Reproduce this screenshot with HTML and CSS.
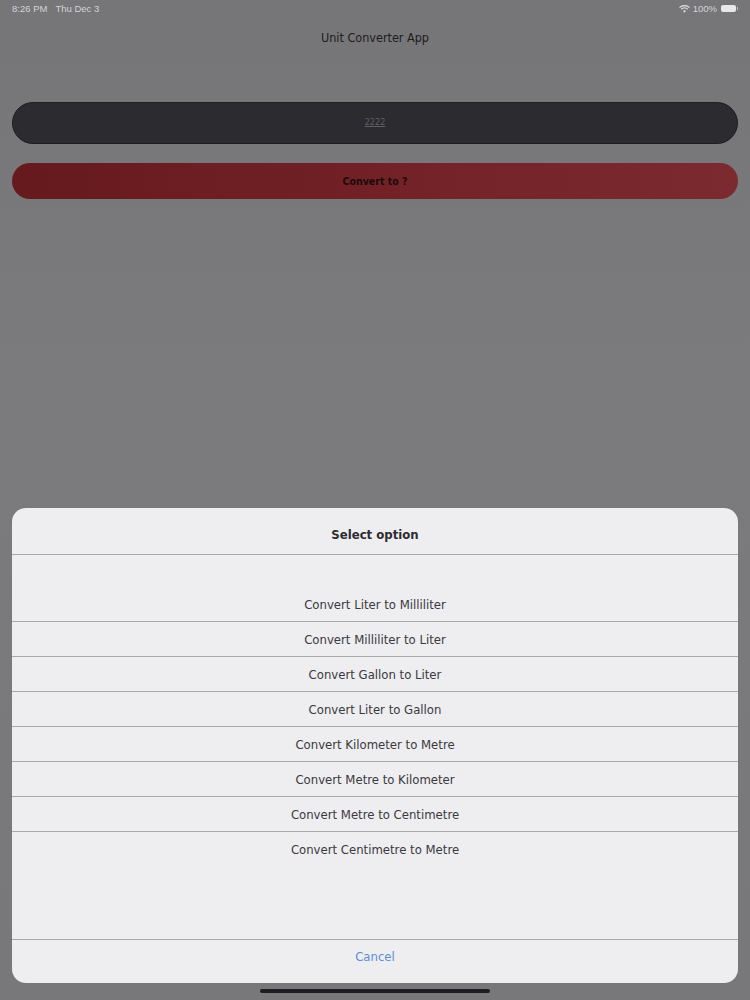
FILE: index.html
```html
<!DOCTYPE html>
<html lang="en">
<head>
<meta charset="utf-8">
<title>Unit Converter App</title>
<link rel="stylesheet" href="styles.css">
</head>
<body>
<div class="screen">
  <div class="status-bar">
    <div class="status-left"><span>8:26 PM</span><span>Thu Dec 3</span></div>
    <div class="status-right">
      <svg class="wifi" width="11" height="8" viewBox="0 0 11 8">
        <path d="M0.5 2.6 A7 7 0 0 1 10.5 2.6" fill="none" stroke="#d8d8da" stroke-width="1.3"/>
        <path d="M2.2 4.3 A4.6 4.6 0 0 1 8.8 4.3" fill="none" stroke="#d8d8da" stroke-width="1.3"/>
        <path d="M5.5 7.8 L3.9 6 A2.3 2.3 0 0 1 7.1 6 Z" fill="#d8d8da"/>
      </svg>
      <span>100%</span>
      <span class="battery"></span>
    </div>
  </div>

  <h1 class="app-title">Unit Converter App</h1>

  <div class="form">
    <div class="input-field"><span class="placeholder">2222</span></div>
    <button class="convert-btn" type="button">Convert to ?</button>
  </div>

  <div class="sheet">
    <div class="sheet-title">Select option</div>
    <ul class="option-list">
      <li>Convert Liter to Milliliter</li>
      <li>Convert Milliliter to Liter</li>
      <li>Convert Gallon to Liter</li>
      <li>Convert Liter to Gallon</li>
      <li>Convert Kilometer to Metre</li>
      <li>Convert Metre to Kilometer</li>
      <li>Convert Metre to Centimetre</li>
      <li>Convert Centimetre to Metre</li>
    </ul>
    <div class="sheet-cancel">Cancel</div>
  </div>

  <div class="home-indicator"></div>
</div>
</body>
</html>
```

FILE: styles.css
```css
* {
  box-sizing: border-box;
}

html, body {
  margin: 0;
  padding: 0;
}

body {
  font-family: "DejaVu Sans Condensed", "DejaVu Sans", sans-serif;
  background: #78777a;
}

.screen {
  width: 750px;
  height: 1000px;
  display: flex;
  flex-direction: column;
  align-items: stretch;
  background: linear-gradient(to bottom, #767578 0%, #7b7b7d 40%, #78777a 100%);
  overflow: hidden;
}

/* status bar */
.status-bar {
  height: 18px;
  padding: 0 14px 1px 12px;
  display: flex;
  justify-content: space-between;
  align-items: center;
  font-family: "Liberation Sans", Arial, sans-serif;
  font-size: 9.5px;
  color: #d4d4d6;
}

.status-left {
  display: flex;
  gap: 8px;
}

.status-right {
  display: flex;
  align-items: center;
  gap: 3px;
}

.battery {
  width: 15px;
  height: 7px;
  border-radius: 2px;
  background: #e8e8ea;
  margin-left: 1px;
  position: relative;
}

.battery::after {
  content: "";
  position: absolute;
  right: -2px;
  top: 2px;
  width: 1px;
  height: 3px;
  background: #bdbdbf;
}

.app-title {
  margin: 11px 0 0;
  text-align: center;
  font-size: 12.5px;
  font-weight: normal;
  color: #1d1c20;
  height: 18px;
  line-height: 18px;
}

/* form */
.form {
  margin-top: 55px;
  padding: 0 12px;
  display: flex;
  flex-direction: column;
  gap: 19px;
}

.input-field {
  height: 42px;
  border-radius: 21px;
  background: #2c2b2f;
  border: 1px solid #1e1d21;
  display: flex;
  align-items: center;
  justify-content: center;
  padding-bottom: 3px;
}

.placeholder {
  font-size: 9px;
  color: #5f5e63;
  text-decoration: underline;
}

.convert-btn {
  height: 36px;
  border: none;
  border-radius: 18px;
  background: linear-gradient(to right, #661a1d 0%, #732227 55%, #7b2a2f 100%);
  font-family: inherit;
  font-size: 10.5px;
  font-weight: bold;
  color: #1c0a0b;
  padding: 0;
}

/* action sheet */
.sheet {
  margin: 309px 12px 0;
  height: 475px;
  border-radius: 14px;
  background: #eeedf0;
  display: flex;
  flex-direction: column;
  overflow: hidden;
}

.sheet-title {
  height: 47px;
  display: flex;
  align-items: center;
  justify-content: center;
  padding-top: 6px;
  font-size: 13px;
  font-weight: bold;
  color: #2c2b30;
  border-bottom: 1px solid #a9a8ad;
}

.option-list {
  list-style: none;
  margin: 0;
  padding: 32px 0 0;
  flex: 1;
  border-bottom: 1px solid #a9a8ad;
}

.option-list li {
  height: 35px;
  display: flex;
  align-items: center;
  justify-content: center;
  font-size: 13px;
  color: #3a393e;
  border-bottom: 1px solid #a9a8ad;
}

.option-list li:last-child {
  border-bottom: none;
}

.sheet-cancel {
  height: 43px;
  display: flex;
  align-items: center;
  justify-content: center;
  font-size: 13px;
  color: #5c8fd6;
  padding-bottom: 10px;
}

.home-indicator {
  align-self: center;
  margin-top: 6px;
  width: 230px;
  height: 4px;
  border-radius: 2px;
  background: #1e1e22;
}
```
